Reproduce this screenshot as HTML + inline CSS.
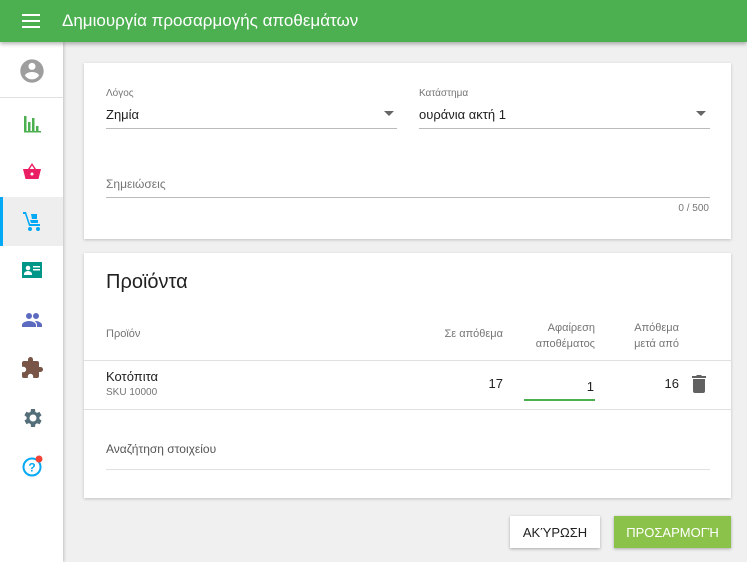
<!DOCTYPE html><html><head><meta charset="utf-8"><style>
*{margin:0;padding:0;box-sizing:border-box}
body{width:747px;height:562px;overflow:hidden;background:#f0f0f0;font-family:"Liberation Sans",sans-serif;position:relative;color:#212121}
.hdr{position:absolute;left:0;top:0;width:747px;height:42px;background:#4caf50;box-shadow:0 2px 4px rgba(0,0,0,.3);z-index:3}
.hdr .t{position:absolute;left:62px;top:11px;color:#fff;font-size:17px}
.side{position:absolute;left:0;top:42px;width:63px;height:520px;background:#fff;box-shadow:1px 0 3px rgba(0,0,0,.2);z-index:2}
.ic{position:absolute;left:20px;width:24px;height:24px}
.card{position:absolute;left:84px;width:647px;background:#fff;box-shadow:0 1px 3px rgba(0,0,0,.2)}
.lbl{position:absolute;font-size:10px;color:#757575}
.val{position:absolute;font-size:13px}
.line{position:absolute;height:1px;background:#d0d0d0}
.g{color:#757575;font-size:11px;position:absolute}
.btn{position:absolute;top:516px;height:32px;font-size:13px;display:flex;align-items:center;justify-content:center;box-shadow:0 1px 3px rgba(0,0,0,.3)}
</style></head><body>
<div class="hdr"><svg style="position:absolute;left:22px;top:14px" width="18" height="14"><rect y="0" width="18" height="2" fill="#fff"/><rect y="6" width="18" height="2" fill="#fff"/><rect y="12" width="18" height="2" fill="#fff"/></svg><div class="t">Δημιουργία προσαρμογής αποθεμάτων</div></div>
<div class="side">
<svg class="ic" style="top:15px;left:18px;width:28px;height:28px" viewBox="0 0 24 24"><path fill="#9e9e9e" d="M12 2C6.5 2 2 6.5 2 12s4.5 10 10 10 10-4.5 10-10S17.5 2 12 2zm0 3c1.7 0 3 1.3 3 3s-1.3 3-3 3-3-1.3-3-3 1.3-3 3-3zm0 14.2c-2.5 0-4.7-1.3-6-3.2 0-2 4-3.1 6-3.1s6 1.1 6 3.1c-1.3 1.9-3.5 3.2-6 3.2z"/></svg>
<div style="position:absolute;left:0;top:55px;width:63px;height:1px;background:#e0e0e0"></div>
<svg class="ic" style="top:70px" viewBox="0 0 24 24"><path fill="#4caf50" d="M4 4h2.5v16H4zM8 10h2.5v10H8zm4-4h2.5v14H12zm4 8h2.5v6H16zm0 0M4 19h17v1.5H4z"/></svg>
<svg class="ic" style="top:118px" viewBox="0 0 24 24"><path fill="#e91e63" d="M12 3l-4 6H3l2.5 10h13L21 9h-5zm0 2.5L14.3 9H9.7zM12 12.5a1.5 1.5 0 110 3 1.5 1.5 0 010-3z"/></svg>
<div style="position:absolute;left:0;top:155px;width:63px;height:49px;background:#eee;border-left:3px solid #03a9f4"></div>
<svg class="ic" style="top:167px" viewBox="0 0 24 24"><path fill="#03a9f4" d="M3 3h3l4 12h10v2H9L5 5H3zm8 2h6v5h-5zm-1 6h8v3h-7zM10 18a2 2 0 110 4 2 2 0 010-4zm8 0a2 2 0 110 4 2 2 0 010-4z"/></svg>
<svg class="ic" style="top:216px" viewBox="0 0 24 24"><path fill="#009688" d="M2 4h20v16H2z"/><circle cx="8" cy="10" r="2.3" fill="#fff"/><path fill="#fff" d="M4 16c0-2 2.5-3 4-3s4 1 4 3v1H4zM13 8h7v1.5h-7zm0 3h7v1.5h-7z"/></svg>
<svg class="ic" style="top:266px" viewBox="0 0 24 24"><path fill="#5c6bc0" d="M9 11a3 3 0 100-6 3 3 0 000 6zm7 0a3 3 0 100-6 3 3 0 000 6zM9 13c-3 0-7 1.5-7 4v2h14v-2c0-2.5-4-4-7-4zm7 0c-.4 0-.8 0-1.2.1 1.3.9 2.2 2.2 2.2 3.9v2h5v-2c0-2.5-4-4-6-4z"/></svg>
<svg class="ic" style="top:314px" viewBox="0 0 24 24"><path fill="#795548" d="M20.5 11H19V7a2 2 0 00-2-2h-4V3.5a2.5 2.5 0 00-5 0V5H4a2 2 0 00-2 2v3.8h1.5a2.7 2.7 0 010 5.4H2V20a2 2 0 002 2h3.8v-1.5a2.7 2.7 0 015.4 0V22H17a2 2 0 002-2v-4h1.5a2.5 2.5 0 000-5z"/></svg>
<svg class="ic" style="top:364px" viewBox="0 0 24 24"><path fill="#546e7a" d="M19.4 13a7.5 7.5 0 000-2l2.1-1.6-2-3.5-2.5 1a7 7 0 00-1.7-1L15 3h-4l-.4 2.7a7 7 0 00-1.7 1l-2.5-1-2 3.5L6.6 11a7.5 7.5 0 000 2l-2.1 1.6 2 3.5 2.5-1a7 7 0 001.7 1L11 21h4l.4-2.7a7 7 0 001.7-1l2.5 1 2-3.5zM13 15.5a3.5 3.5 0 110-7 3.5 3.5 0 010 7z"/></svg>
<svg class="ic" style="top:412px" viewBox="0 0 24 24"><circle cx="12" cy="13" r="8.5" fill="none" stroke="#03a9f4" stroke-width="2"/><text x="12" y="17.5" font-size="12" font-weight="bold" text-anchor="middle" fill="#03a9f4" font-family="Liberation Sans">?</text><circle cx="19" cy="5" r="3.5" fill="#f44336"/></svg>
</div>
<div class="card" style="top:63px;height:176px">
<div class="lbl" style="left:22px;top:25px">Λόγος</div><div class="val" style="left:22px;top:44px">Ζημία</div>
<svg style="position:absolute;left:300px;top:48px" width="10" height="5"><path d="M0 0h10L5 5z" fill="#666"/></svg>
<div class="line" style="left:22px;top:65px;width:291px;background:#bbb"></div>
<div class="lbl" style="left:335px;top:25px">Κατάστημα</div><div class="val" style="left:335px;top:44px">ουράνια ακτή 1</div>
<svg style="position:absolute;left:612px;top:48px" width="10" height="5"><path d="M0 0h10L5 5z" fill="#666"/></svg>
<div class="line" style="left:335px;top:65px;width:291px;background:#bbb"></div>
<div class="val" style="left:22px;top:114px;color:#757575;font-size:12px">Σημειώσεις</div>
<div class="line" style="left:22px;top:134px;width:604px;background:#bbb"></div>
<div class="lbl" style="right:22px;top:140px">0 / 500</div>
</div>
<div class="card" style="top:253px;height:245px">
<div style="position:absolute;left:22px;top:18px;font-size:20px">Προϊόντα</div>
<div class="g" style="left:22px;top:75px">Προϊόν</div>
<div class="g" style="right:228px;top:75px">Σε απόθεμα</div>
<div class="g" style="right:136px;top:67px;text-align:right;line-height:16px">Αφαίρεση<br>αποθέματος</div>
<div class="g" style="right:52px;top:67px;text-align:right;line-height:16px">Απόθεμα<br>μετά από</div>
<div class="line" style="left:0;top:107px;width:647px;background:#e0e0e0"></div>
<div class="val" style="left:22px;top:116px">Κοτόπιτα</div>
<div class="g" style="left:22px;top:134px;font-size:10px">SKU 10000</div>
<div class="val" style="right:228px;top:123px">17</div>
<div class="val" style="right:137px;top:126px">1</div>
<div style="position:absolute;left:440px;top:146px;width:71px;height:2px;background:#4caf50"></div>
<div class="val" style="right:52px;top:123px">16</div>
<svg style="position:absolute;left:608px;top:122px" width="14" height="18" viewBox="0 0 14 18"><path fill="#616161" d="M1 4h12v12a2 2 0 01-2 2H3a2 2 0 01-2-2zM0 1h4l1-1h4l1 1h4v2H0z"/></svg>
<div class="line" style="left:0;top:156px;width:647px;background:#e0e0e0"></div>
<div class="val" style="left:22px;top:189px;color:#555;font-size:12px">Αναζήτηση στοιχείου</div>
<div class="line" style="left:22px;top:216px;width:604px;background:#e0e0e0"></div>
</div>
<div class="btn" style="left:510px;width:90px;background:#fff">ΑΚΎΡΩΣΗ</div>
<div class="btn" style="left:614px;width:117px;background:#8bc34a;color:#fff">ΠΡΟΣΑΡΜΟΓΉ</div>
</body></html>
